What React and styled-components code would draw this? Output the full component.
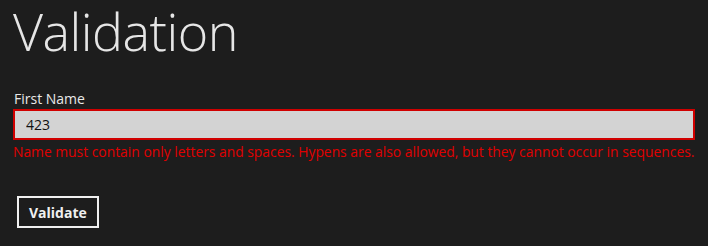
import styled, {createGlobalStyle} from 'styled-components';

const GlobalStyle = createGlobalStyle`
  html, body {
    margin: 0;
    padding: 0;
    background: #1d1d1d;
  }
`;

const Page = styled.div`
  width: 708px;
  height: 246px;
  box-sizing: border-box;
  padding: 0 13px;
  background: #1d1d1d;
  font-family: 'Open Sans', 'Noto Sans', sans-serif;
  overflow: hidden;
`;

const Title = styled.h1`
  margin: 0;
  font-size: 52px;
  font-weight: 300;
  line-height: 62px;
  color: #e6e6e6;
  letter-spacing: -0.5px;
`;

const Field = styled.div`
  display: flex;
  flex-direction: column;
  margin-top: 27px;
`;

const Label = styled.label`
  font-size: 14px;
  line-height: 19px;
  color: #e8e8e8;
  padding-left: 1px;
`;

const Input = styled.input`
  box-sizing: border-box;
  width: 682px;
  height: 31px;
  margin-top: 1px;
  padding: 0 11px;
  border: 2px solid ${p => (p.$invalid ? '#d00000' : '#888')};
  background: #d3d3d3;
  color: #111;
  font-family: inherit;
  font-size: 14px;
  outline: none;
`;

const Error = styled.div`
  margin-top: 2px;
  font-size: 13.85px;
  line-height: 20px;
  color: #e00000;
  white-space: nowrap;
`;

const Button = styled.button`
  margin: 34px 0 0 4px;
  height: 32px;
  padding: 0 10px;
  border: 2px solid #f0f0f0;
  background: transparent;
  color: #f0f0f0;
  font-family: inherit;
  font-size: 14px;
  font-weight: 700;
`;

export default function App() {
  return (
    <Page>
      <GlobalStyle/>
      <Title>Validation</Title>
      <Field>
        <Label>First Name</Label>
        <Input $invalid defaultValue="423"/>
        <Error>Name must contain only letters and spaces. Hypens are also allowed, but they cannot occur in sequences.</Error>
      </Field>
      <Button>Validate</Button>
    </Page>
  );
}
